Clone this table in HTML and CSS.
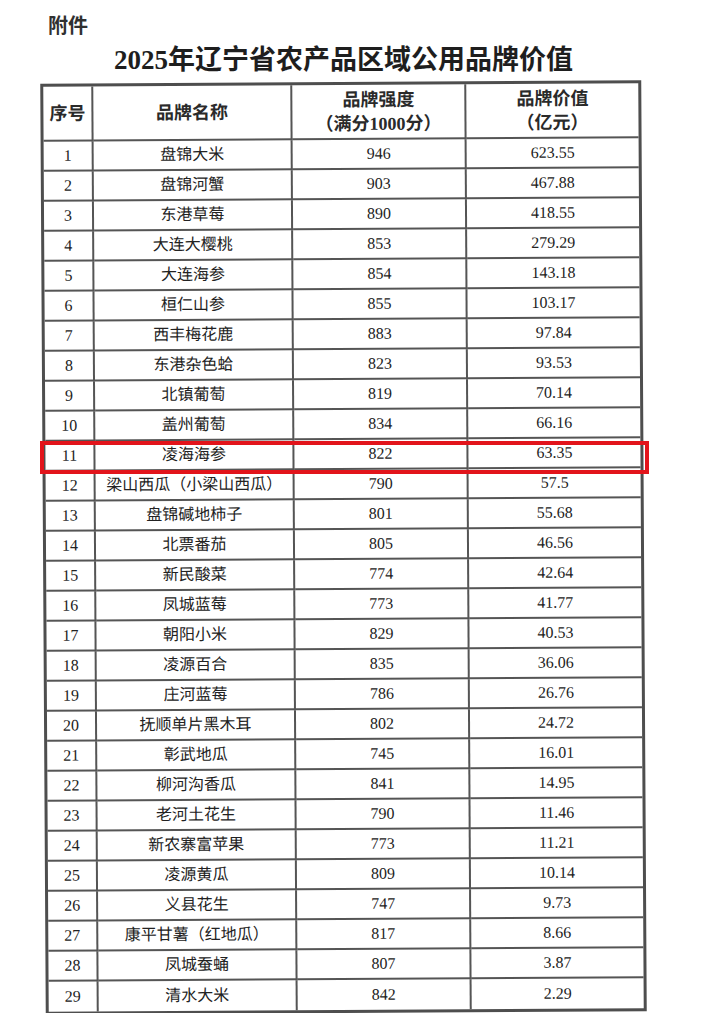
FILE: index.html
```html
<!DOCTYPE html>
<html lang="zh-CN">
<head>
<meta charset="utf-8">
<title>2025年辽宁省农产品区域公用品牌价值</title>
<link rel="stylesheet" href="styles.css">
</head>
<body>
<div class="page">
  <div class="annex">附件</div>
  <h1 class="title">2025年辽宁省农产品区域公用品牌价值</h1>
  <div class="sheet">
    <table class="brands">
      <colgroup>
        <col class="c-no">
        <col class="c-name">
        <col class="c-score">
        <col class="c-value">
      </colgroup>
      <thead>
        <tr>
          <th>序号</th>
          <th>品牌名称</th>
          <th>品牌强度<br>（满分1000分）</th>
          <th>品牌价值<br>（亿元）</th>
        </tr>
      </thead>
      <tbody>
        <tr><td>1</td><td class="name">盘锦大米</td><td>946</td><td>623.55</td></tr>
        <tr><td>2</td><td class="name">盘锦河蟹</td><td>903</td><td>467.88</td></tr>
        <tr><td>3</td><td class="name">东港草莓</td><td>890</td><td>418.55</td></tr>
        <tr><td>4</td><td class="name">大连大樱桃</td><td>853</td><td>279.29</td></tr>
        <tr><td>5</td><td class="name">大连海参</td><td>854</td><td>143.18</td></tr>
        <tr><td>6</td><td class="name">桓仁山参</td><td>855</td><td>103.17</td></tr>
        <tr><td>7</td><td class="name">西丰梅花鹿</td><td>883</td><td>97.84</td></tr>
        <tr><td>8</td><td class="name">东港杂色蛤</td><td>823</td><td>93.53</td></tr>
        <tr><td>9</td><td class="name">北镇葡萄</td><td>819</td><td>70.14</td></tr>
        <tr><td>10</td><td class="name">盖州葡萄</td><td>834</td><td>66.16</td></tr>
        <tr><td>11</td><td class="name">凌海海参</td><td>822</td><td>63.35</td></tr>
        <tr><td>12</td><td class="name">梁山西瓜（小梁山西瓜）</td><td>790</td><td>57.5</td></tr>
        <tr><td>13</td><td class="name">盘锦碱地柿子</td><td>801</td><td>55.68</td></tr>
        <tr><td>14</td><td class="name">北票番茄</td><td>805</td><td>46.56</td></tr>
        <tr><td>15</td><td class="name">新民酸菜</td><td>774</td><td>42.64</td></tr>
        <tr><td>16</td><td class="name">凤城蓝莓</td><td>773</td><td>41.77</td></tr>
        <tr><td>17</td><td class="name">朝阳小米</td><td>829</td><td>40.53</td></tr>
        <tr><td>18</td><td class="name">凌源百合</td><td>835</td><td>36.06</td></tr>
        <tr><td>19</td><td class="name">庄河蓝莓</td><td>786</td><td>26.76</td></tr>
        <tr><td>20</td><td class="name">抚顺单片黑木耳</td><td>802</td><td>24.72</td></tr>
        <tr><td>21</td><td class="name">彰武地瓜</td><td>745</td><td>16.01</td></tr>
        <tr><td>22</td><td class="name">柳河沟香瓜</td><td>841</td><td>14.95</td></tr>
        <tr><td>23</td><td class="name">老河土花生</td><td>790</td><td>11.46</td></tr>
        <tr><td>24</td><td class="name">新农寨富苹果</td><td>773</td><td>11.21</td></tr>
        <tr><td>25</td><td class="name">凌源黄瓜</td><td>809</td><td>10.14</td></tr>
        <tr><td>26</td><td class="name">义县花生</td><td>747</td><td>9.73</td></tr>
        <tr><td>27</td><td class="name">康平甘薯（红地瓜）</td><td>817</td><td>8.66</td></tr>
        <tr><td>28</td><td class="name">凤城蚕蛹</td><td>807</td><td>3.87</td></tr>
        <tr><td>29</td><td class="name">清水大米</td><td>842</td><td>2.29</td></tr>
      </tbody>
    </table>
  </div>
  <div class="mark"></div>
</div>
</body>
</html>
```

FILE: styles.css
```css
html, body {
  margin: 0;
  padding: 0;
  background: #ffffff;
}

body {
  color: #262626;
  font-family: "Liberation Serif", "Noto Sans CJK SC", serif;
}

.page {
  position: relative;
  width: 601px;
  padding: 13px 0 0 43px;
}

.annex {
  margin-left: 5px;
  font-family: "Noto Sans CJK SC", sans-serif;
  font-weight: 700;
  font-size: 20px;
  line-height: 24px;
  color: #303030;
}

.title {
  margin: 6px 0 0;
  text-align: center;
  font-family: "Liberation Serif", "Noto Sans CJK SC", serif;
  font-weight: 700;
  font-size: 27px;
  line-height: 34px;
  color: #1e1e1e;
}

.sheet {
  margin-top: 5px;
  width: 601px;
  transform: rotate(-0.34deg);
}

.brands {
  width: 601px;
  table-layout: fixed;
  border-collapse: separate;
  border-spacing: 0;
  border: 3px solid #4e4e4e;
  font-size: 16px;
}

.c-no { width: 50px; }
.c-name { width: 199px; }
.c-score { width: 174px; }

.brands th,
.brands td {
  padding: 0;
  text-align: center;
  vertical-align: middle;
  border-right: 2px solid #555555;
  border-bottom: 2px solid #555555;
  white-space: nowrap;
}

.brands th:last-child,
.brands td:last-child {
  border-right: 0;
}

.brands tbody tr:last-child td {
  border-bottom: 0;
}

.brands thead tr {
  height: 55px;
}

.brands th {
  font-family: "Liberation Serif", "Noto Sans CJK SC", serif;
  font-weight: 700;
  font-size: 18px;
  line-height: 24px;
  color: #2a2a2a;
}

.brands tbody tr {
  height: 30px;
}

.brands td {
  line-height: 20px;
  color: #222222;
}

.brands td.name {
  font-family: "Liberation Serif", "Noto Sans CJK SC", serif;
}

.mark {
  position: absolute;
  top: 441px;
  left: 40px;
  width: 609px;
  height: 33px;
  box-sizing: border-box;
  border: 4px solid #e2141b;
  pointer-events: none;
}
```
